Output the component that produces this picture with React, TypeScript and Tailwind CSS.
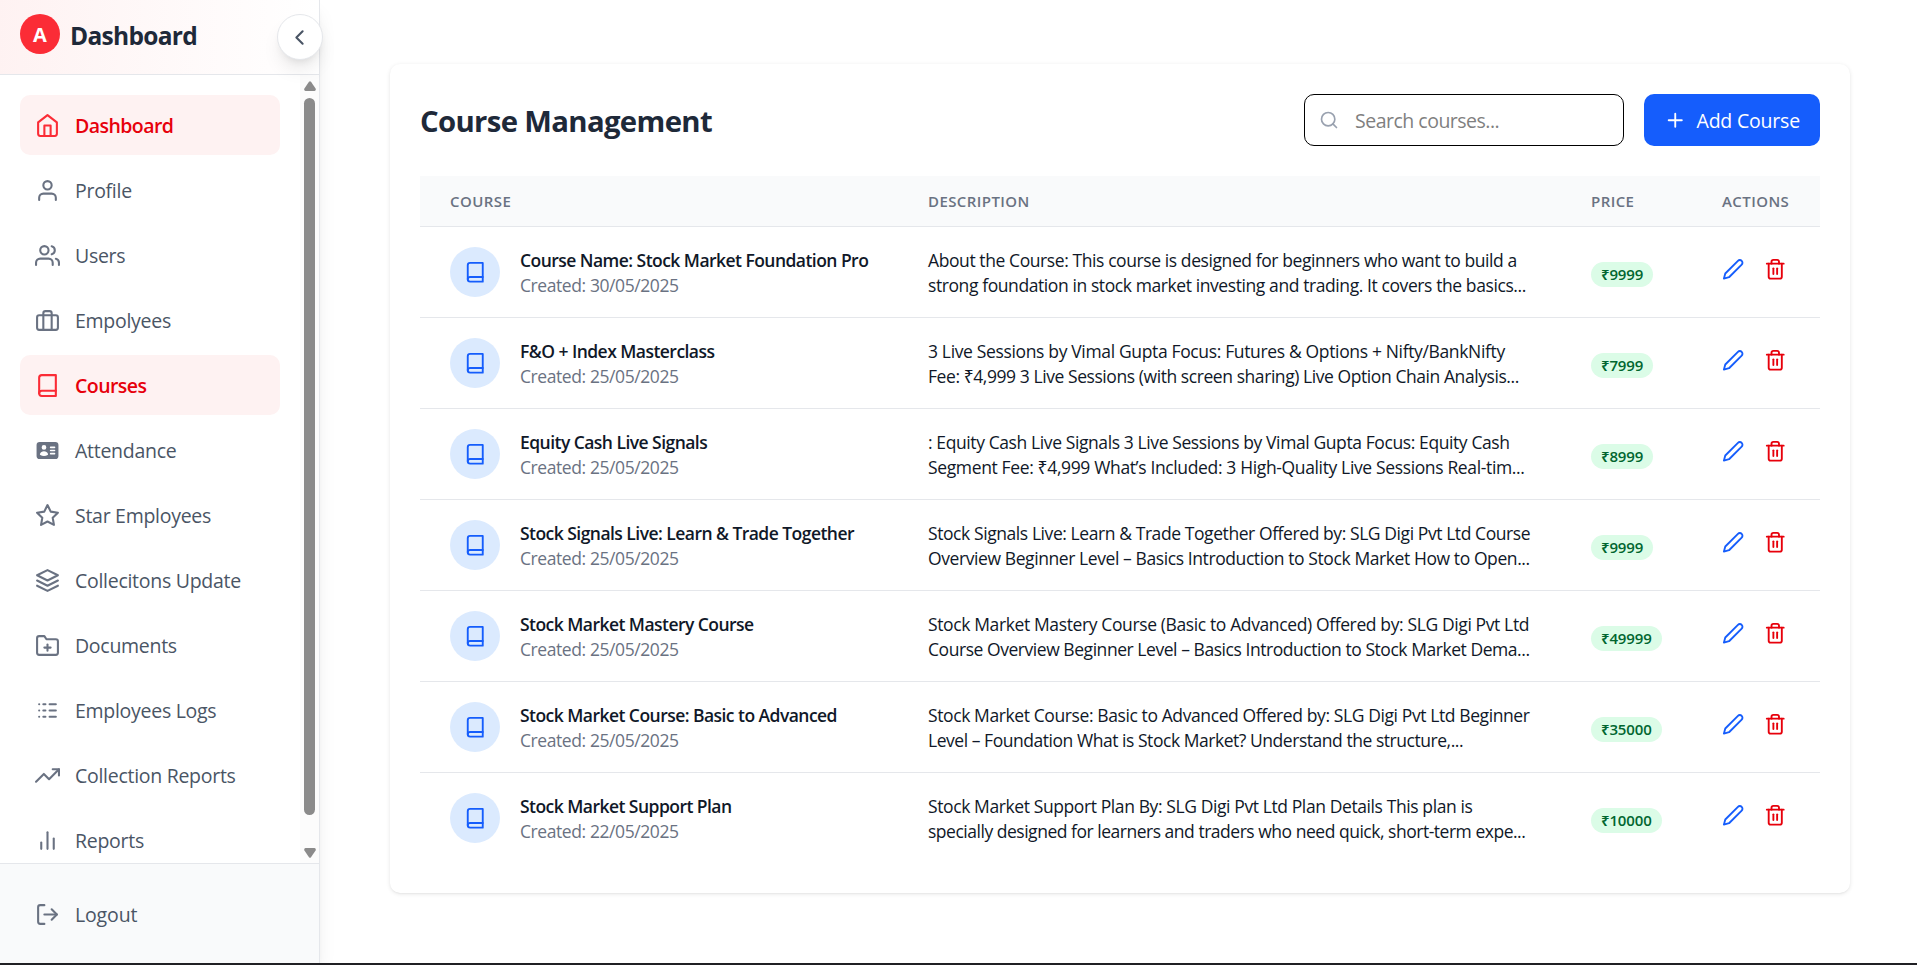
import type { ComponentType } from "react";
import {
  FiHome, FiUser, FiUsers, FiBriefcase, FiBook, FiStar, FiLayers, FiFolderPlus,
  FiTrendingUp, FiBarChart2, FiLogOut, FiChevronLeft, FiSearch, FiPlus, FiEdit2, FiTrash2,
} from "react-icons/fi";
import { HiIdentification } from "react-icons/hi2";
import { TbLogs } from "react-icons/tb";

type Icon = ComponentType<{ className?: string }>;

const nav: { label: string; icon: Icon; active?: boolean }[] = [
  { label: "Dashboard", icon: FiHome, active: true },
  { label: "Profile", icon: FiUser },
  { label: "Users", icon: FiUsers },
  { label: "Empolyees", icon: FiBriefcase },
  { label: "Courses", icon: FiBook, active: true },
  { label: "Attendance", icon: HiIdentification },
  { label: "Star Employees", icon: FiStar },
  { label: "Collecitons Update", icon: FiLayers },
  { label: "Documents", icon: FiFolderPlus },
  { label: "Employees Logs", icon: TbLogs },
  { label: "Collection Reports", icon: FiTrendingUp },
  { label: "Reports", icon: FiBarChart2 },
];

type Line = { text: string; tracking: string };

const courses: { title: string; date: string; price: string; lines: Line[] }[] = [
  {
    title: "Course Name: Stock Market Foundation Pro", date: "30/05/2025", price: "9999",
    lines: [
      { text: "About the Course: This course is designed for beginners who want to build a", tracking: "tracking-[-0.41px]" },
      { text: "strong foundation in stock market investing and trading. It covers the basics...", tracking: "tracking-[-0.41px]" },
    ],
  },
  {
    title: "F&O + Index Masterclass", date: "25/05/2025", price: "7999",
    lines: [
      { text: "3 Live Sessions by Vimal Gupta Focus: Futures & Options + Nifty/BankNifty", tracking: "tracking-[-0.35px]" },
      { text: "Fee: ₹4,999 3 Live Sessions (with screen sharing) Live Option Chain Analysis...", tracking: "tracking-[-0.43px]" },
    ],
  },
  {
    title: "Equity Cash Live Signals", date: "25/05/2025", price: "8999",
    lines: [
      { text: ": Equity Cash Live Signals 3 Live Sessions by Vimal Gupta Focus: Equity Cash", tracking: "tracking-[-0.4px]" },
      { text: "Segment Fee: ₹4,999 What’s Included: 3 High-Quality Live Sessions Real-tim...", tracking: "tracking-[-0.36px]" },
    ],
  },
  {
    title: "Stock Signals Live: Learn & Trade Together", date: "25/05/2025", price: "9999",
    lines: [
      { text: "Stock Signals Live: Learn & Trade Together Offered by: SLG Digi Pvt Ltd Course", tracking: "tracking-[-0.42px]" },
      { text: "Overview Beginner Level – Basics Introduction to Stock Market How to Open...", tracking: "tracking-[-0.41px]" },
    ],
  },
  {
    title: "Stock Market Mastery Course", date: "25/05/2025", price: "49999",
    lines: [
      { text: "Stock Market Mastery Course (Basic to Advanced) Offered by: SLG Digi Pvt Ltd", tracking: "tracking-[-0.38px]" },
      { text: "Course Overview Beginner Level – Basics Introduction to Stock Market Dema...", tracking: "tracking-[-0.45px]" },
    ],
  },
  {
    title: "Stock Market Course: Basic to Advanced", date: "25/05/2025", price: "35000",
    lines: [
      { text: "Stock Market Course: Basic to Advanced Offered by: SLG Digi Pvt Ltd Beginner", tracking: "tracking-[-0.4px]" },
      { text: "Level – Foundation What is Stock Market? Understand the structure,...", tracking: "tracking-[-0.46px]" },
    ],
  },
  {
    title: "Stock Market Support Plan", date: "22/05/2025", price: "10000",
    lines: [
      { text: "Stock Market Support Plan By: SLG Digi Pvt Ltd Plan Details This plan is", tracking: "tracking-[-0.4px]" },
      { text: "specially designed for learners and traders who need quick, short-term expe...", tracking: "tracking-[-0.48px]" },
    ],
  },
];

function Sidebar() {
  return (
    <aside className="relative flex w-80 shrink-0 flex-col border-r border-gray-200 bg-white shadow-[0_12px_19px_-4px_rgba(0,0,0,0.1),0_5px_8px_-5px_rgba(0,0,0,0.1)]">
      <header className="flex h-[75px] shrink-0 border-b border-gray-200 bg-gradient-to-r from-red-50 to-white pl-5 pt-3.5">
        <div className="flex size-10 items-center justify-center rounded-full bg-[#fb2c36] pt-px text-[20px] font-bold text-white">A</div>
        <h1 className="ml-2.5 pt-1 text-[24.5px] leading-[35px] font-bold tracking-[-0.7px] text-gray-800">Dashboard</h1>
      </header>
      <button className="absolute top-3.5 left-[277px] z-10 flex size-[46px] items-center justify-center rounded-full border border-gray-200 bg-white pt-px pr-px text-gray-600 shadow-[0_12px_19px_-4px_rgba(0,0,0,0.1),0_5px_8px_-5px_rgba(0,0,0,0.1)]">
        <FiChevronLeft className="size-[25px]" />
      </button>
      <div className="flex min-h-0 flex-1">
        <nav className="flex flex-1 flex-col gap-[5px] overflow-hidden p-5">
          {nav.map(({ label, icon: I, active }) => (
            <a
              key={label}
              className={
                active
                  ? "flex h-[60px] shrink-0 items-center gap-[15px] rounded-[10px] bg-red-50 px-[15px] text-[19.5px] font-semibold tracking-[-0.55px] text-[#e7000b]"
                  : "flex h-[60px] shrink-0 items-center gap-[15px] rounded-[10px] px-[15px] text-[19.5px] tracking-[-0.28px] text-gray-600"
              }
            >
              <I className={active ? "size-[25px] text-[#fb2c36]" : "size-[25px] text-gray-500"} />
              <span className="pt-0.5">{label}</span>
            </a>
          ))}
        </nav>
        <div className="flex w-[19px] flex-col items-center bg-[#fcfcfc] pt-[6px] pb-[5px]">
          <svg className="h-[10px] w-[12px]" viewBox="0 0 12 10" fill="#8b8b8b">
            <path d="M5 .7Q6-.4 7 .7L11.6 7.5Q12.3 9.7 10.5 10H1.5Q-.3 9.7.4 7.5Z" />
          </svg>
          <div className="mt-[7px] h-[717px] w-[11px] rounded-full bg-[#8b8b8b]" />
          <div className="flex-1" />
          <svg className="h-[10px] w-[12px] rotate-180" viewBox="0 0 12 10" fill="#8b8b8b">
            <path d="M5 .7Q6-.4 7 .7L11.6 7.5Q12.3 9.7 10.5 10H1.5Q-.3 9.7.4 7.5Z" />
          </svg>
        </div>
      </div>
      <footer className="h-[100px] shrink-0 border-t border-gray-200 bg-gray-50 px-5 pt-5">
        <a className="flex h-[60px] items-center gap-[15px] px-[15px] text-[19.5px] tracking-[-0.15px] text-gray-600">
          <FiLogOut className="size-[25px] text-gray-500" />
          <span className="pt-0.5">Logout</span>
        </a>
      </footer>
    </aside>
  );
}

function CourseTable() {
  return (
    <div>
      <div className="grid h-[51px] grid-cols-[478px_663px_131px_128px] items-center border-b border-gray-200 bg-gray-50 text-[15px] leading-5 font-semibold tracking-[0.42px] text-gray-500 uppercase">
        <div className="-mt-px pl-[30px]">Course</div>
        <div className="-mt-px pl-[30px]">Description</div>
        <div className="-mt-px pl-[30px]">Price</div>
        <div className="-mt-px pl-[30px]">Actions</div>
      </div>
      <div className="divide-y divide-gray-200 text-[17.5px] leading-[25px]">
        {courses.map((c) => (
          <div key={c.title} className="grid grid-cols-[478px_663px_131px_128px] grid-rows-[50px] py-5">
            <div className="flex gap-5 pl-[30px]">
              <div className="flex size-[50px] shrink-0 items-center justify-center rounded-full bg-blue-100 text-[#155dfc]">
                <FiBook className="size-[22.5px]" />
              </div>
              <div className="pt-px whitespace-nowrap">
                <div className="font-semibold tracking-[-0.54px] text-gray-900">{c.title}</div>
                <div className="tracking-[-0.42px] text-gray-500">Created: {c.date}</div>
              </div>
            </div>
            <div className="pt-px pl-[30px] whitespace-nowrap text-gray-900">
              {c.lines.map((l) => <div key={l.text} className={l.tracking}>{l.text}</div>)}
            </div>
            <div className="pt-[15px] pl-[30px]">
              <span className="flex h-[25px] w-fit items-center rounded-full bg-green-100 px-2.5 text-[15px] font-semibold tracking-[-0.15px] text-green-800">₹{c.price}</span>
            </div>
            <div className="flex gap-[19px] pt-[11px] pl-[30px]">
              <FiEdit2 className="size-[22.5px] text-[#155dfc]" />
              <FiTrash2 className="size-[22.5px] text-[#e7000b]" />
            </div>
          </div>
        ))}
      </div>
    </div>
  );
}

export default function App() {
  return (
    <div className="flex h-[965px] w-full flex-col overflow-hidden bg-white font-['Open_Sans','Noto_Sans',sans-serif]">
      <div className="flex h-[963px] overflow-hidden">
        <Sidebar />
        <main className="flex-1 pt-16 pl-[70px]">
          <section className="h-[829px] w-[1460px] rounded-[10px] bg-white p-[30px] shadow-[0_1px_4px_rgba(0,0,0,0.1),0_1px_2px_-1px_rgba(0,0,0,0.1)]">
            <div className="mb-[30px] flex h-[52px] items-center justify-between">
              <h2 className="pt-px text-[29.3px] leading-10 font-bold tracking-[-0.65px] text-gray-800">Course Management</h2>
              <div className="flex gap-5">
                <label className="flex h-[52px] w-80 items-center gap-4 rounded-[10px] border border-black pl-3.5">
                  <FiSearch className="size-5 text-gray-400" />
                  <input className="w-60 pt-0.5 text-[19.5px] tracking-[-0.5px] outline-none placeholder:text-[#7f7f7f]" placeholder="Search courses..." />
                </label>
                <button className="flex h-[52px] w-44 items-center gap-2.5 rounded-[10px] bg-[#155dfc] pl-5 text-[19.5px] tracking-[-0.2px] whitespace-nowrap text-white">
                  <FiPlus className="size-[22.5px] shrink-0" />
                  <span className="pt-0.5">Add Course</span>
                </button>
              </div>
            </div>
            <CourseTable />
          </section>
        </main>
      </div>
      <div className="h-0.5 shrink-0 bg-[#202024]" />
    </div>
  );
}
